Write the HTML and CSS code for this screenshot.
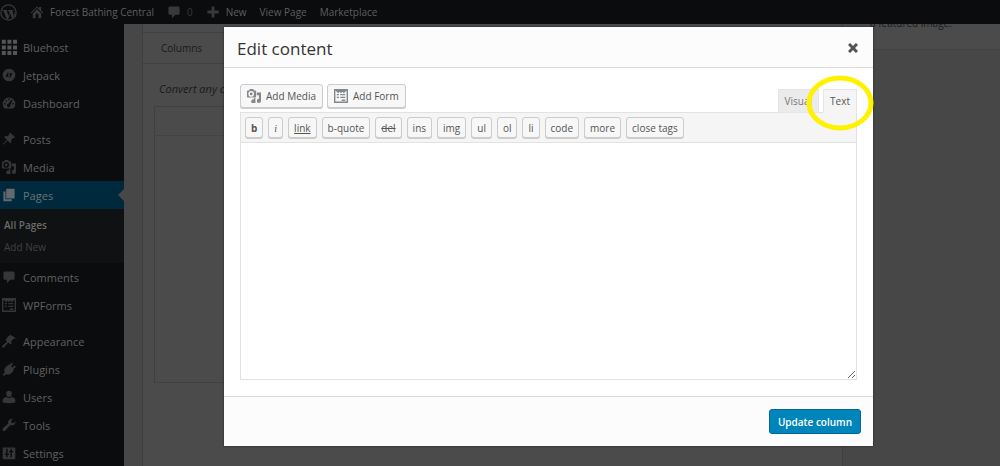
FILE: index.html
```html
<!DOCTYPE html>
<html lang="en">
<head>
    <meta charset="utf-8">
    <meta name="viewport" content="width=device-width, initial-scale=1">
    <title>Edit Page - Forest Bathing Central</title>
    <link rel="stylesheet" href="styles.css">
</head>
<body>

<!-- shared icons -->
<svg class="icon-defs" aria-hidden="true">
    <symbol id="icon-comment" viewBox="0 0 20 20"><path d="M4 2h12q2 0 2 2v8q0 2-2 2h-4l-5 5v-5H4q-2 0-2-2V4q0-2 2-2z"/></symbol>
    <symbol id="icon-media" viewBox="0 0 20 20"><path fill-rule="evenodd" d="M1 2h2l1-2h5l1 2h2q1 0 1 1v8q0 1-1 1H1q-1 0-1-1V3zm5 1a4 4 0 1 0 0 8 4 4 0 0 0 0-8zm0 2a2 2 0 1 1 0 4 2 2 0 0 1 0-4zM14 5h6v12a3 3 0 1 1-3-3V9h-3zM10 13h2v4a3 3 0 1 1-2-2z"/></symbol>
    <symbol id="icon-form" viewBox="0 0 20 20"><path fill-rule="evenodd" d="M0 0h20v20H0zm2 2v16h16V2l-4 4-2-2-2 2-2-2-2 2zm2 5h3v2H4zm5 0h7v2H9zm-5 4h3v2H4zm5 0h7v2H9zm2 4h5v2h-5z"/></symbol>
</svg>

<header class="admin-bar">
    <a href="#" class="wp-logo" aria-label="About WordPress">
        <svg viewBox="0 0 20 20"><circle cx="10" cy="10" r="9" fill="none" stroke="currentColor" stroke-width="1.500"/><path d="M2.500 7h6v1H7.700l2.400 6 1.300-4-1-2H9.500V7h6v1h-1.200l2 6 1.200-4.500q.3-2-1.500-4.500 2 2 2 5 0 4-4 7L12.300 11l-2.800 7-1.500-.5L4 8H2.500z"/></svg>
    </a>
    <a href="#" class="site-name">
        <svg viewBox="0 0 20 20"><path fill-rule="evenodd" d="M10 2l3 3V3h3v5l3 3-1 1-8-8-8 8-1-1zM10 6l6 6v7H4v-7zm-2 7v6h4v-6q-2-2-4 0z"/></svg>
        Forest Bathing Central
    </a>
    <a href="#" class="bar-comments"><svg><use href="#icon-comment"/></svg><span>0</span></a>
    <a href="#" class="bar-new"><svg viewBox="0 0 20 20"><path d="M8 2h4v6h6v4h-6v6H8v-6H2V8h6z"/></svg>New</a>
    <a href="#">View Page</a>
    <a href="#">Marketplace</a>
</header>

<div class="wrap">
    <nav class="admin-menu">
        <ul>
            <li><a href="#"><svg class="bluehost" viewBox="0 0 20 20"><path d="M1 1h5v5H1zm7 0h5v5H8zm7 0h5v5h-5zM1 8h5v5H1zm7 0h5v5H8zm7 0h5v5h-5zM1 15h5v5H1zm7 0h5v5H8zm7 0h5v5h-5z"/></svg>Bluehost</a></li>
            <li><a href="#"><svg viewBox="0 0 20 20"><path fill-rule="evenodd" d="M10 1a9 9 0 1 1 0 18 9 9 0 0 1 0-18zM9 5l-4 7 4 1zm2 2v8l4-7z"/></svg>Jetpack</a></li>
            <li><a href="#"><svg viewBox="0 0 20 20"><path fill-rule="evenodd" d="M4 18a9 9 0 1 1 12 0zM9 4v2h2V4zM5 6v2h2V6zm-2 4v2h2v-2zm12 0v2h2v-2zm-1-5l-5 6a2.500 2.500 0 1 0 3 2l3-7z"/></svg>Dashboard</a></li>
            <li class="group"><a href="#"><svg viewBox="0 0 20 20"><path d="M12 1l7 7-2 1-1-1-3 4q1 3-1 4l-4-4-6 6-1 0 0-1 6-6-4-4q2-2 5-1l3-3-1-1z"/></svg>Posts</a></li>
            <li><a href="#"><svg><use href="#icon-media"/></svg>Media</a></li>
            <li class="current"><a href="#"><svg viewBox="0 0 20 20"><path d="M6 1h12v14H6zM2 5h3v11h9v3H2z"/></svg>Pages</a>
                <ul class="submenu">
                    <li class="current-page"><a href="#">All Pages</a></li>
                    <li><a href="#">Add New</a></li>
                </ul>
            </li>
            <li><a href="#"><svg><use href="#icon-comment"/></svg>Comments</a></li>
            <li><a href="#"><svg><use href="#icon-form"/></svg>WPForms</a></li>
            <li class="group"><a href="#"><svg viewBox="0 0 20 20"><path d="M8 4l4-3 8 5-4 1-3 4 1 2-2 2-3-3-6 7q-3 1-3-2l7-6-2-3 2-2z"/></svg>Appearance</a></li>
            <li><a href="#"><svg viewBox="0 0 20 20"><path d="M11 4l3-3 2 1-3 4 2 2 3-3 2 2-4 3 1 2-5 5q-3 2-6 0l-3 3-2-2 3-3q-2-3 0-6l5-5z"/></svg>Plugins</a></li>
            <li><a href="#"><svg viewBox="0 0 20 20"><path d="M10 1q4 0 4 4 0 5-4 5T6 5q0-4 4-4zM6 10q4 3 8 0 5 1 5 5v3q-9 2-18 0v-3q0-4 5-5z"/></svg>Users</a></li>
            <li><a href="#"><svg viewBox="0 0 20 20"><path d="M17 7l2-3q1 4-2 6-2 1-5 0l-7 8q-2 2-4 0-1-2 1-4l7-6q-1-3 1-5t6-2l-3 3 1 3z"/></svg>Tools</a></li>
            <li><a href="#"><svg viewBox="0 0 20 20"><path fill-rule="evenodd" d="M2 2h16q1 0 1 1v15q0 1-1 1H2q-1 0-1-1V3q0-1 1-1zm4 2v7H4v2h2v3h2v-3h2v-2H8V4zm6 0v3h-2v2h2v7h2V9h2V7h-2V4z"/></svg>Settings</a></li>
        </ul>
    </nav>

    <main class="page-content">
        <section class="postbox">
            <h2>Columns</h2>
            <p>Convert any content</p>
            <div class="column-box"></div>
        </section>
        <aside class="side-box"><p>a featured image.</p></aside>
    </main>
</div>

<div class="modal" role="dialog" aria-labelledby="modal-title">
    <div class="modal-header">
        <h1 id="modal-title">Edit content</h1>
        <button class="close" aria-label="Close"><svg viewBox="0 0 10 10"><path d="M1 1l8 8M9 1L1 9"/></svg></button>
    </div>
    <div class="modal-body">
        <div class="editor-tools">
            <button class="media-button"><svg><use href="#icon-media"/></svg>Add Media</button>
            <button class="media-button"><svg><use href="#icon-form"/></svg>Add Form</button>
            <div class="editor-tabs">
                <button>Visual</button>
                <button class="active">Text</button>
                <svg class="highlight" viewBox="0 0 68 56"><ellipse cx="34" cy="28" rx="31" ry="25"/></svg>
            </div>
        </div>
        <div class="quicktags">
            <button><b>b</b></button>
            <button><i>i</i></button>
            <button><u>link</u></button>
            <button>b-quote</button>
            <button><del>del</del></button>
            <button>ins</button>
            <button>img</button>
            <button>ul</button>
            <button>ol</button>
            <button>li</button>
            <button>code</button>
            <button>more</button>
            <button>close tags</button>
        </div>
        <textarea aria-label="Content"></textarea>
    </div>
    <div class="modal-footer">
        <button class="update">Update column</button>
    </div>
</div>

</body>
</html>
```
FILE: styles.css
```css
* {
    box-sizing: border-box;
}

body {
    margin: 0;
    height: 100vh;
    overflow: hidden;
    display: flex;
    flex-direction: column;
    background: #474747;
    color: #555;
    font-family: "Open Sans", sans-serif;
    font-size: 11px;
}

ul, h1, h2, p {
    margin: 0;
    padding: 0;
    list-style: none;
    font-weight: normal;
}

a {
    color: inherit;
    text-decoration: none;
}

button {
    font-family: inherit;
    cursor: pointer;
}

svg {
    width: 14px;
    height: 14px;
    flex: none;
    fill: currentColor;
}

.icon-defs {
    position: absolute;
    width: 0;
    height: 0;
}

/* top bar */
.admin-bar {
    display: flex;
    flex: none;
    align-items: center;
    gap: 13px;
    height: 24px;
    background: #0a0c0d;
    color: #5e5f60;
    font-size: 10px;
}

.admin-bar a {
    display: flex;
    align-items: center;
    gap: 6px;
}

.admin-bar svg {
    color: #37393b;
}

.admin-bar .wp-logo svg {
    width: 17px;
    height: 17px;
}

.admin-bar .bar-comments {
    color: #37393b;
}

/* left menu */
.wrap {
    display: flex;
    flex: 1;
    min-height: 0;
}

.admin-menu {
    flex: none;
    width: 124px;
    padding-top: 9px;
    background: #0a0c0d;
    color: #606162;
}

.admin-menu a {
    display: flex;
    align-items: center;
    gap: 7px;
    height: 28px;
    padding-left: 2px;
}

.admin-menu svg {
    color: #343638;
}

.admin-menu .bluehost {
    width: 16px;
    height: 16px;
    margin-left: -1px;
    margin-right: -1px;
    color: #555;
}

.group {
    margin-top: 8px;
}

.current > a {
    position: relative;
    background: #00293d;
    color: #6b7478;
}

.current > a svg {
    color: #64696c;
}

.current > a::after {
    content: "";
    position: absolute;
    right: 0;
    border: 6px solid transparent;
    border-right-color: #484848;
    border-left: 0;
}

.submenu {
    height: 54px;
    padding: 5px 2px;
    background: #0f1112;
    color: #3f4143;
    font-size: 10px;
}

.submenu a {
    height: 22px;
}

.submenu .current-page {
    color: #6b6b6b;
    font-weight: 600;
}

/* page behind the modal */
.page-content {
    display: flex;
    flex: 1;
    padding-left: 18px;
    color: #1a1a1a;
}

.postbox {
    flex: 1;
    padding-top: 8px;
    border: solid #404040;
    border-width: 0 1px;
    background: #4b4b4b;
}

.postbox h2 {
    height: 32px;
    padding-left: 18px;
    border: solid #404040;
    border-width: 1px 0;
    font-size: 10px;
    line-height: 30px;
}

.postbox p {
    margin: 17px 16px 9px;
    font-style: italic;
    line-height: 16px;
}

.column-box {
    height: 277px;
    margin: 0 11px;
    border: 1px solid #404040;
}

.column-box::before {
    content: "";
    display: block;
    height: 28px;
    border-bottom: 1px solid #444;
}

.side-box {
    flex: none;
    width: 157px;
    height: 26px;
    overflow: hidden;
    padding-left: 27px;
    border-bottom: 1px solid #414141;
    background: #4b4b4b;
    font-size: 10px;
}

.side-box p {
    margin-top: -9px;
    line-height: 16px;
}

/* modal */
.modal {
    position: absolute;
    top: 27px;
    bottom: 20px;
    left: 224px;
    right: 127px;
    display: flex;
    flex-direction: column;
    background: #fff;
    box-shadow: 0 0 2px #222;
}

.modal-header {
    display: flex;
    justify-content: space-between;
    align-items: center;
    height: 41px;
    padding: 2px 14px 0 13px;
    border-bottom: 1px solid #ddd;
    background: #fcfcfc;
}

.modal-header h1 {
    color: #333;
    font-size: 17px;
}

.close {
    display: flex;
    padding: 1px;
    border: 0;
    background: none;
}

.close svg {
    width: 10px;
    height: 10px;
    stroke: #555;
    stroke-width: 3;
}

.modal-body {
    display: flex;
    flex: 1;
    flex-direction: column;
    padding: 16px;
}

.editor-tools {
    display: flex;
    gap: 4px;
    height: 28px;
}

.media-button {
    display: flex;
    align-items: center;
    gap: 5px;
    height: 24px;
    padding: 0 6px;
    border: 1px solid #ccc;
    border-radius: 3px;
    background: #f7f7f7;
    box-shadow: 0 1px 0 #ccc;
    color: #555;
    font-size: 10px;
}

.media-button svg {
    color: #82878c;
}

.editor-tabs {
    position: relative;
    display: flex;
    align-items: flex-end;
    gap: 4px;
    margin-left: auto;
}

.editor-tabs button {
    height: 24px;
    margin-bottom: -1px;
    padding: 0 6px;
    border: 1px solid #e5e5e5;
    background: #ebebeb;
    color: #777;
    font-size: 10px;
}

.editor-tabs .active {
    border-bottom-color: #f5f5f5;
    background: #f5f5f5;
    color: #555;
}

.highlight {
    position: absolute;
    right: -17px;
    bottom: -19px;
    width: 68px;
    height: 56px;
    fill: none;
    stroke: #fff200;
    stroke-width: 5;
    pointer-events: none;
}

.quicktags {
    display: flex;
    gap: 5px;
    height: 31px;
    padding: 4px;
    border: 1px solid #e2e2e2;
    background: #f5f5f5;
}

.quicktags button {
    height: 21px;
    padding: 0 5px;
    border: 1px solid #ccc;
    border-radius: 3px;
    background: #f7f7f7;
    box-shadow: 0 1px 0 #ccc;
    color: #555;
    font-size: 10px;
}

.quicktags i {
    font-family: "Liberation Serif", serif;
}

textarea {
    flex: 1;
    width: 100%;
    border: 1px solid #e2e2e2;
    border-top: 0;
    background: #fff;
    resize: vertical;
}

.modal-footer {
    display: flex;
    justify-content: flex-end;
    align-items: center;
    height: 50px;
    padding: 0 12px;
    border-top: 1px solid #ddd;
    background: #fcfcfc;
}

.update {
    height: 25px;
    padding: 0 8px;
    border: 1px solid #006799;
    border-radius: 3px;
    background: #0085ba;
    color: #fff;
    font-size: 10px;
    font-weight: 600;
}
```
